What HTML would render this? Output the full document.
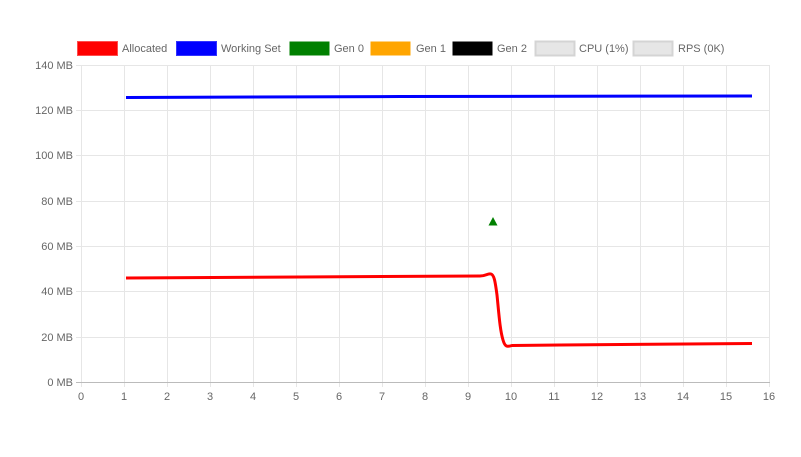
<!DOCTYPE html>
<html><head><style>
html,body{margin:0;padding:0;background:#fff;}
svg{display:block;font-family:"Liberation Sans",sans-serif;}
</style></head><body>
<svg width="801" height="457" viewBox="0 0 801 457">
<g font-size="11" fill="#666">
<rect x="77.5" y="41.5" width="40" height="14" fill="#ff0000" stroke="#ff4d4d"/>
<text x="122" y="52">Allocated</text>
<rect x="176.5" y="41.5" width="40" height="14" fill="#0000ff" stroke="#3333ff"/>
<text x="221" y="52">Working Set</text>
<rect x="289.5" y="41.5" width="40" height="14" fill="#008000"/>
<text x="334" y="52">Gen 0</text>
<rect x="370.5" y="41.5" width="40" height="14" fill="#ffa500"/>
<text x="416" y="52">Gen 1</text>
<rect x="452.5" y="41.5" width="40" height="14" fill="#000"/>
<text x="497" y="52">Gen 2</text>
<rect x="535.5" y="41.5" width="39" height="14" fill="#e6e6e6" stroke="#d4d4d4" stroke-width="2"/>
<text x="579" y="52">CPU (1%)</text>
<rect x="633.5" y="41.5" width="39" height="14" fill="#e6e6e6" stroke="#d4d4d4" stroke-width="2"/>
<text x="678" y="52">RPS (0K)</text>
</g>
<g stroke="#e6e6e6" stroke-width="1">
<line x1="76" y1="65.5" x2="770" y2="65.5"/>
<line x1="76" y1="110.5" x2="770" y2="110.5"/>
<line x1="76" y1="155.5" x2="770" y2="155.5"/>
<line x1="76" y1="201.5" x2="770" y2="201.5"/>
<line x1="76" y1="246.5" x2="770" y2="246.5"/>
<line x1="76" y1="291.5" x2="770" y2="291.5"/>
<line x1="76" y1="337.5" x2="770" y2="337.5"/>
<line x1="81.5" y1="65" x2="81.5" y2="387"/><line x1="124.5" y1="65" x2="124.5" y2="387"/><line x1="167.5" y1="65" x2="167.5" y2="387"/><line x1="210.5" y1="65" x2="210.5" y2="387"/><line x1="253.5" y1="65" x2="253.5" y2="387"/><line x1="296.5" y1="65" x2="296.5" y2="387"/><line x1="339.5" y1="65" x2="339.5" y2="387"/><line x1="382.5" y1="65" x2="382.5" y2="387"/><line x1="425.5" y1="65" x2="425.5" y2="387"/><line x1="468.5" y1="65" x2="468.5" y2="387"/><line x1="511.5" y1="65" x2="511.5" y2="387"/><line x1="554.5" y1="65" x2="554.5" y2="387"/><line x1="597.5" y1="65" x2="597.5" y2="387"/><line x1="640.5" y1="65" x2="640.5" y2="387"/><line x1="683.5" y1="65" x2="683.5" y2="387"/><line x1="726.5" y1="65" x2="726.5" y2="387"/><line x1="769.5" y1="65" x2="769.5" y2="387"/>
</g>
<line x1="76" y1="382.5" x2="770" y2="382.5" stroke="#bbb"/>
<g font-size="11" fill="#666" text-anchor="end">
<text x="73" y="69">140 MB</text><text x="73" y="114">120 MB</text><text x="73" y="159">100 MB</text><text x="73" y="205">80 MB</text><text x="73" y="250">60 MB</text><text x="73" y="295">40 MB</text><text x="73" y="341">20 MB</text><text x="73" y="386">0 MB</text>
</g>
<g font-size="11" fill="#666" text-anchor="middle">
<text x="81" y="400">0</text><text x="124" y="400">1</text><text x="167" y="400">2</text><text x="210" y="400">3</text><text x="253" y="400">4</text><text x="296" y="400">5</text><text x="339" y="400">6</text><text x="382" y="400">7</text><text x="425" y="400">8</text><text x="468" y="400">9</text><text x="511" y="400">10</text><text x="554" y="400">11</text><text x="597" y="400">12</text><text x="640" y="400">13</text><text x="683" y="400">14</text><text x="726" y="400">15</text><text x="769" y="400">16</text>
</g>
<path d="M126 97.5 L400 96.5 L752 96" stroke="#0000ff" stroke-width="3" fill="none"/>
<path d="M126 278 L300 277 L480 276 C486 276 488 273 491 274 C494 275 495 280 497 295 C499 315 500 330 503 340 C505 347 507 347 512 345.5 L560 345 L752 343.5" stroke="#ff0000" stroke-width="3" fill="none" stroke-linejoin="round"/>
<polygon points="493,217 488.5,225.5 497.5,225.5" fill="#008000"/>
</svg>
</body></html>
